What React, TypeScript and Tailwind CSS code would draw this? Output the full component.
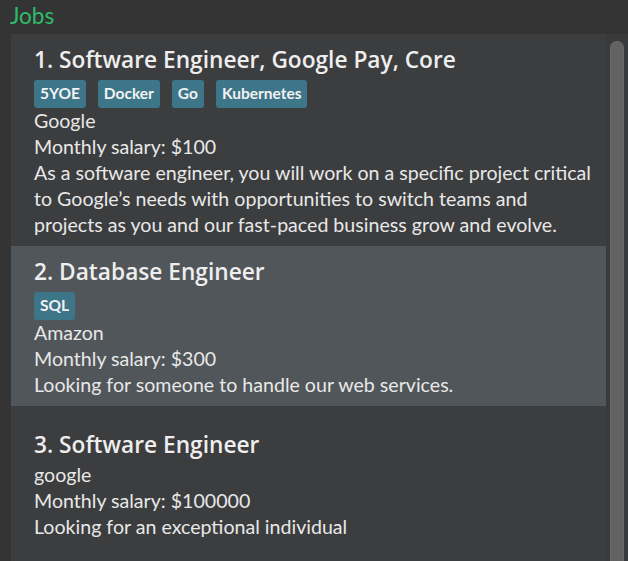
type Job = {
  title: string;
  tags: string[];
  company: string;
  salary: string;
  desc: string;
  selected?: boolean;
};

const jobs: Job[] = [
  {
    title: "1. Software Engineer, Google Pay, Core",
    tags: ["5YOE", "Docker", "Go", "Kubernetes"],
    company: "Google",
    salary: "Monthly salary: $100",
    desc: "As a software engineer, you will work on a specific project critical to Google\u2019s needs with opportunities to switch teams and projects as you and our fast-paced business grow and evolve.",
  },
  {
    title: "2. Database Engineer",
    tags: ["SQL"],
    company: "Amazon",
    salary: "Monthly salary: $300",
    desc: "Looking for someone to handle our web services.",
    selected: true,
  },
  {
    title: "3. Software Engineer",
    tags: [],
    company: "google",
    salary: "Monthly salary: $100000",
    desc: "Looking for an exceptional individual",
  },
];

function JobCard({ job }: { job: Job }) {
  const hasTags = job.tags.length > 0;
  return (
    <div
      className={
        "pl-[23px] pr-[8px] pb-[8px] " +
        (job.selected ? "bg-[#51565a] " : "") +
        (hasTags ? "pt-[10px]" : "pt-[23px]")
      }
    >
      <div className="font-['Open_Sans'] text-[22.7px] leading-[31px] font-semibold text-[#eeeeee] whitespace-nowrap">
        {job.title}
      </div>
      {hasTags ? (
        <div className="flex gap-[12px] mt-[5px]">
          {job.tags.map((t) => (
            <span
              key={t}
              className="h-[28px] flex items-center px-[6px] rounded-[3px] bg-[#3d7589] text-[#f2f2f2] font-['Lato'] font-bold text-[15.5px]"
            >
              {t}
            </span>
          ))}
        </div>
      ) : (
        <div className="h-[2px]" />
      )}
      <div className="font-['Lato'] text-[19.6px] leading-[26px] text-[#e8e8e8]">
        <div>{job.company}</div>
        <div>{job.salary}</div>
        <div>{job.desc}</div>
      </div>
    </div>
  );
}

export default function App() {
  return (
    <div className="w-[628px] h-[561px] overflow-hidden bg-[#343434] flex flex-col">
      <div className="h-[34px] shrink-0 pl-[10px] pt-[3px] font-['Lato'] text-[22.5px] leading-[26px] text-[#2dbd69]">
        Jobs
      </div>
      <div className="flex-1 min-h-0 ml-[11px] flex bg-[#3c3d3f]">
        <div className="flex-1 min-w-0 overflow-hidden">
          {jobs.map((j) => (
            <JobCard key={j.title} job={j} />
          ))}
        </div>
        <div className="w-[22px] shrink-0 bg-[#393a3b] pl-[4px] pr-[4px] pt-[7px] flex">
          <div className="w-[14px] h-full bg-[#636363] rounded-t-[7px] border border-[#6a6a6a] border-b-0" />
        </div>
      </div>
    </div>
  );
}
